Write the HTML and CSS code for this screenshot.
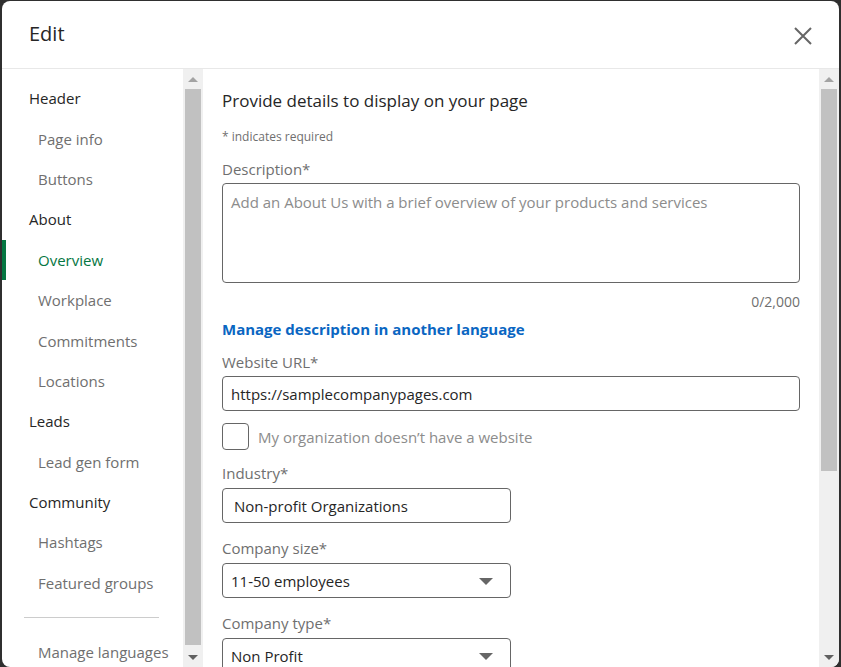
FILE: index.html
```html
<!DOCTYPE html>
<html lang="en">
<head>
    <meta charset="UTF-8">
    <title>Edit</title>
    <link rel="stylesheet" href="styles.css">
</head>
<body>
    <div class="dialog">
        <div class="dialog-header">
            <h2 class="dialog-title">Edit</h2>
            <button class="close-btn" aria-label="Close">
                <svg width="20" height="20" viewBox="0 0 20 20"><path d="M2 2 L18 18 M18 2 L2 18" stroke="#666" stroke-width="2" fill="none"/></svg>
            </button>
        </div>
        <div class="dialog-body">
            <nav class="side-nav">
                <div class="nav-head">Header</div>
                <div class="nav-item">Page info</div>
                <div class="nav-item">Buttons</div>
                <div class="nav-head">About</div>
                <div class="nav-item active">Overview</div>
                <div class="nav-item">Workplace</div>
                <div class="nav-item">Commitments</div>
                <div class="nav-item">Locations</div>
                <div class="nav-head">Leads</div>
                <div class="nav-item">Lead gen form</div>
                <div class="nav-head">Community</div>
                <div class="nav-item">Hashtags</div>
                <div class="nav-item">Featured groups</div>
                <hr class="nav-divider">
                <div class="nav-item">Manage languages</div>
            </nav>
            <div class="scrollbar">
                <div class="arrow up"></div>
                <div class="track"><div class="thumb thumb-left"></div></div>
                <div class="arrow down"></div>
            </div>
            <main class="form">
                <h3 class="form-title">Provide details to display on your page</h3>
                <p class="required-note">* indicates required</p>

                <label class="field-label">Description*</label>
                <div class="textarea">Add an About Us with a brief overview of your products and services</div>
                <div class="counter">0/2,000</div>

                <a class="lang-link" href="#">Manage description in another language</a>

                <label class="field-label">Website URL*</label>
                <div class="input wide">https://samplecompanypages.com</div>

                <div class="check-row">
                    <span class="checkbox"></span>
                    <span class="check-label">My organization doesn’t have a website</span>
                </div>

                <label class="field-label industry-label">Industry*</label>
                <div class="input narrow indent">Non-profit Organizations</div>

                <label class="field-label after-input">Company size*</label>
                <div class="input narrow select">11-50 employees<span class="caret"></span></div>

                <label class="field-label after-input">Company type*</label>
                <div class="input narrow select">Non Profit<span class="caret"></span></div>
            </main>
            <div class="scrollbar">
                <div class="arrow up"></div>
                <div class="track"><div class="thumb thumb-right"></div></div>
                <div class="arrow down"></div>
            </div>
        </div>
    </div>
</body>
</html>
```

FILE: styles.css
```css
html, body {
    height: 100%;
}
body {
    margin: 0;
    background-color: #2f2f2f;
    font-family: "Segoe UI", "Open Sans", "Noto Sans", sans-serif;
    overflow: hidden;
}
.dialog {
    box-sizing: border-box;
    width: 837px;
    height: 666px;
    margin: 1px 0 0 2px;
    background-color: #fff;
    border-radius: 8px;
    display: flex;
    flex-direction: column;
    overflow: hidden;
}
.dialog-header {
    height: 67px;
    flex-shrink: 0;
    display: flex;
    align-items: center;
    justify-content: space-between;
    padding: 0 26px 0 27px;
    border-bottom: 1px solid #e8e8e8;
}
.dialog-title {
    margin: 0 0 3px 0;
    font-size: 20px;
    font-weight: 400;
    color: #262626;
}
.close-btn {
    border: none;
    background: none;
    padding: 0;
    width: 20px;
    height: 20px;
    margin-top: 2px;
}
.dialog-body {
    flex: 1;
    display: flex;
    min-height: 0;
}
.side-nav {
    width: 181px;
    flex-shrink: 0;
    padding-top: 9px;
    font-size: 15px;
}
.nav-head,
.nav-item {
    height: 40.4px;
    display: flex;
    align-items: center;
    white-space: nowrap;
}
.nav-head {
    padding-left: 27px;
    color: #262626;
}
.nav-item {
    padding-left: 36px;
    color: #6f6f6f;
    position: relative;
}
.nav-item.active {
    color: #057642;
}
.nav-item.active::before {
    content: "";
    position: absolute;
    left: 0;
    top: 0;
    bottom: 0;
    width: 4px;
    background-color: #057642;
}
.nav-divider {
    border: none;
    border-top: 1px solid #ccc;
    margin: 14px 24px 14px 22px;
}
.scrollbar {
    width: 20px;
    flex-shrink: 0;
    background-color: #f0f0f0;
    display: flex;
    flex-direction: column;
}
.arrow {
    height: 20px;
    display: flex;
    align-items: center;
    justify-content: center;
}
.arrow::after {
    content: "";
    border-left: 5px solid transparent;
    border-right: 5px solid transparent;
}
.arrow.up::after {
    border-bottom: 5px solid #a3a3a3;
}
.arrow.down::after {
    border-top: 5px solid #606060;
}
.track {
    flex: 1;
    padding: 0 2px;
}
.thumb {
    background-color: #c1c1c1;
}
.thumb-left {
    height: 556px;
}
.thumb-right {
    height: 382px;
}
.form {
    flex: 1;
    overflow: hidden;
    padding: 20px 19px 0 19px;
    color: #6f6f6f;
    font-size: 15px;
}
.form-title {
    margin: 0;
    font-size: 17px;
    font-weight: 400;
    color: #262626;
    line-height: 24px;
}
.required-note {
    margin: 16px 0 0 0;
    font-size: 12px;
    line-height: 16px;
}
.field-label {
    display: block;
    line-height: 20px;
    margin-top: 13px;
    margin-bottom: 4px;
}
.required-note + .field-label {
    margin-top: 14px;
}
.field-label.industry-label {
    margin-bottom: 5px;
}
.field-label.after-input {
    margin-top: 15px;
    margin-bottom: 5px;
}
.textarea {
    box-sizing: border-box;
    height: 100px;
    border: 1px solid #666;
    border-radius: 4px;
    padding: 7px 8px;
    color: #8c8c8c;
    line-height: 22px;
}
.counter {
    text-align: right;
    font-size: 14px;
    line-height: 20px;
    margin-top: 9px;
}
.lang-link {
    display: block;
    margin-top: 7px;
    color: #0a66c2;
    font-weight: 700;
    text-decoration: none;
    line-height: 20px;
}
.input {
    box-sizing: border-box;
    height: 35px;
    border: 1px solid #666;
    border-radius: 4px;
    padding: 0 8px;
    display: flex;
    align-items: center;
    color: #262626;
}
.input.narrow {
    width: 289px;
}
.input.indent {
    padding-left: 11px;
}
.select {
    justify-content: space-between;
    padding-right: 17px;
}
.caret {
    border-left: 7px solid transparent;
    border-right: 7px solid transparent;
    border-top: 7px solid #666;
    margin-top: 1px;
}
.check-row {
    display: flex;
    align-items: center;
    margin-top: 12px;
}
.checkbox {
    box-sizing: border-box;
    width: 27px;
    height: 27px;
    border: 1px solid #666;
    border-radius: 4px;
    margin-right: 9px;
}
.check-label {
    color: #8c8c8c;
}
```
